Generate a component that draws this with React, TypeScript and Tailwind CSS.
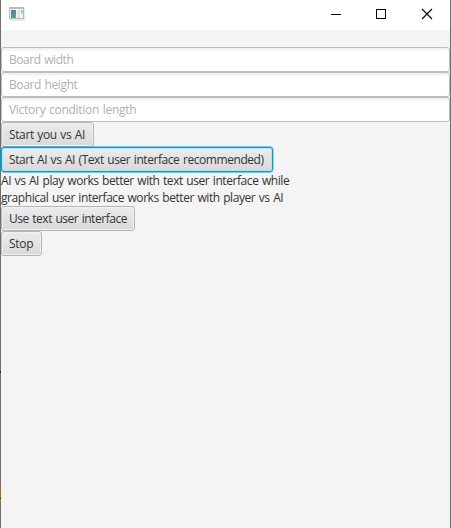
import React from "react";

function Field({ label, tracking }: { label: string; tracking: string }) {
  return (
    <input
      aria-label={label}
      placeholder={label}
      className={`block h-[25px] w-full rounded-[3px] border border-[#bdbdbd] bg-white bg-linear-to-b from-[#ededed] to-white to-[4px] px-[7px] text-[12px] outline-none [word-spacing:0.8px] placeholder:text-[#b0b0b0] ${tracking}`}
    />
  );
}

function Button({ children, focused = false, className }: { children: React.ReactNode; focused?: boolean; className: string }) {
  return (
    <button
      className={`flex h-[25px] items-center rounded-[3px] border px-[7px] pt-px whitespace-nowrap text-[#333] [word-spacing:0.8px] bg-linear-to-b from-[#ececec] to-[#d9d9d9] ${className} ${
        focused
          ? "border-[#039ed3] shadow-[inset_0_0_0_1px_#b8e2f0,0_0_0_0.4px_#039ed3]"
          : "border-[#b5b5b5] shadow-[inset_0_0_0_1px_#f1f1f1]"
      }`}
    >
      {children}
    </button>
  );
}

export default function App() {
  return (
    <div className="relative flex h-[528px] w-[451px] flex-col border-x border-[#707070] bg-[#f4f4f4] font-['Open_Sans','Noto_Sans',sans-serif] text-[12px] text-[#333] [word-spacing:0.8px]">
      <header className="flex h-[30px] shrink-0 items-start justify-between bg-white">
        <svg className="mt-[7px] ml-2" width="17" height="15" viewBox="0 0 17 15" shapeRendering="crispEdges">
          <defs>
            <linearGradient id="screen" x1="0" y1="0" x2="1" y2="1">
              <stop offset="0" stopColor="#467eaa" />
              <stop offset="1" stopColor="#57ad76" />
            </linearGradient>
          </defs>
          <path d="M1 1h15v13H1z" fill="#e8e8e8" />
          <path d="M0 0h15v12H0z" fill="#b7bac2" />
          <path d="M1 2h13v9H1z" fill="#f5f5f5" />
          <path d="M2 3h5v8H2z" fill="url(#screen)" />
          <path d="M8 3h3v8H8z" fill="#e4e4e4" />
          <path d="M12 3h2v4h-2z" fill="#a8d5cd" />
          <path d="M12 3h1v2h-1z" fill="#9bbbe0" />
        </svg>
        <div className="flex">
          <svg width="46" height="30" viewBox="0 0 46 30" shapeRendering="crispEdges">
            <path d="M18 14h10v1H18z" fill="#000" />
          </svg>
          <svg width="46" height="30" viewBox="0 0 46 30" shapeRendering="crispEdges">
            <path d="M17.5 9.5h9v9h-9z" fill="none" stroke="#000" />
          </svg>
          <svg width="45" height="30" viewBox="0 0 45 30">
            <path d="M17 9l10 10M27 9L17 19" fill="none" stroke="#000" strokeWidth="1.1" />
          </svg>
        </div>
      </header>
      <main className="flex flex-col items-start pt-[17px]">
        <Field label="Board width" tracking="tracking-[-0.43px]" />
        <Field label="Board height" tracking="tracking-[-0.38px]" />
        <Field label="Victory condition length" tracking="tracking-[-0.28px]" />
        <Button className="w-[93px] tracking-[-0.38px]">Start you vs AI</Button>
        <Button className="w-[272px] tracking-[-0.43px]" focused>
          Start AI vs AI (Text user interface recommended)
        </Button>
        <p className="h-[34px] leading-[17px] tracking-[-0.43px] whitespace-nowrap">
          AI vs AI play works better with text user interface while
          <br />
          graphical user interface works better with player vs AI
        </p>
        <Button className="w-[134px] tracking-[-0.47px]">Use text user interface</Button>
        <Button className="w-[41px] tracking-[-0.25px]">Stop</Button>
      </main>
      <span className="absolute top-[371px] -left-px h-[2px] w-px bg-[#182b3a]" />
      <span className="absolute top-[485px] -left-px h-[18px] w-px bg-linear-to-b from-[#9a6b3c] to-[#9a7528]" />
      <span className="absolute top-[498px] -left-px h-px w-px bg-[#222]" />
    </div>
  );
}
